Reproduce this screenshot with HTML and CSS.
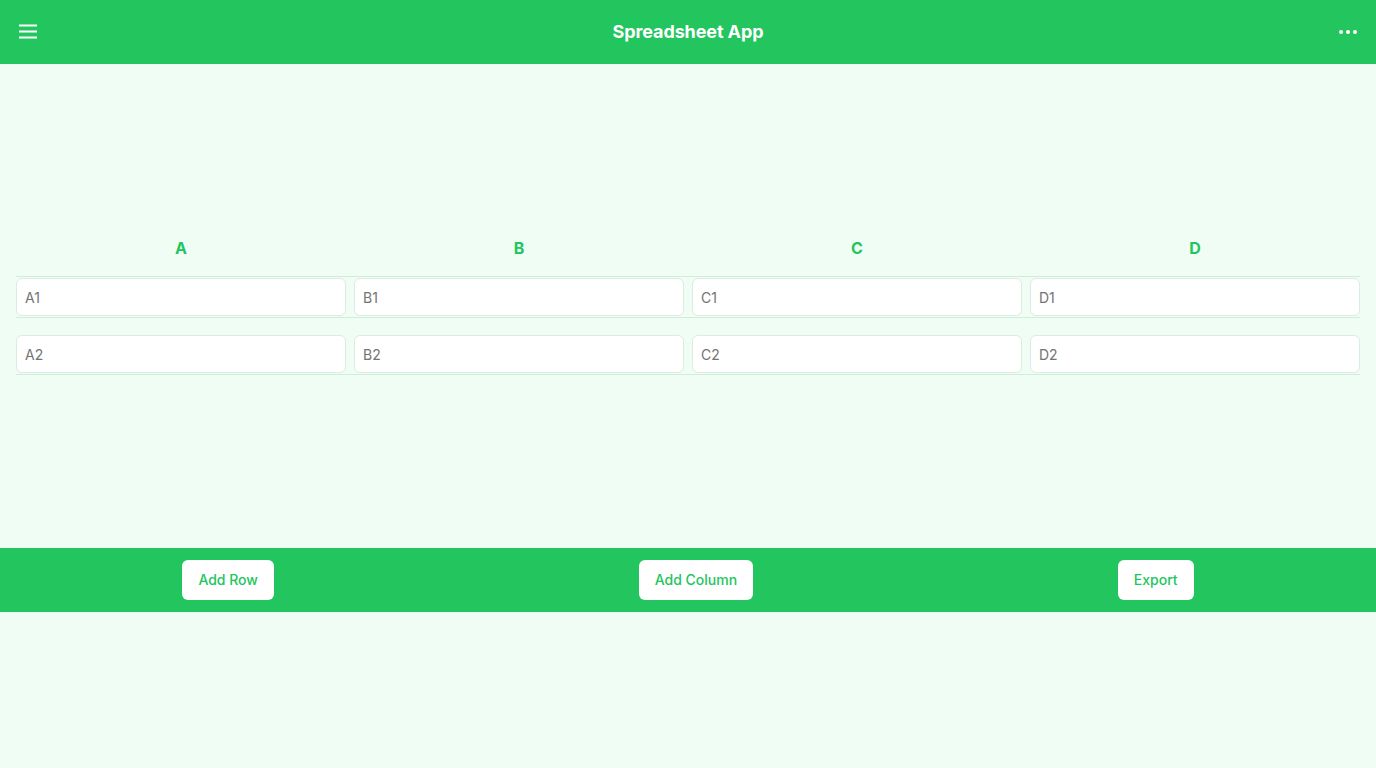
FILE: index.html
```html
<!DOCTYPE html>
<html lang="en">
<head>
<meta charset="utf-8">
<title>Spreadsheet App</title>
<link rel="stylesheet" href="styles.css">
</head>
<body>
<header class="topbar">
  <button class="icon-btn" aria-label="Menu">
    <svg width="20" height="20" viewBox="0 0 20 20"><path d="M1 3.5h18M1 9.5h18M1 15.5h18" stroke="#fff" stroke-width="2" fill="none"/></svg>
  </button>
  <h1 class="title">Spreadsheet App</h1>
  <button class="icon-btn" aria-label="More">
    <svg width="20" height="20" viewBox="0 0 20 20"><circle cx="3" cy="10" r="2" fill="#fff"/><circle cx="10" cy="10" r="2" fill="#fff"/><circle cx="17" cy="10" r="2" fill="#fff"/></svg>
  </button>
</header>
<main class="content">
  <div class="sheet">
    <div class="row head">
      <div class="col-head">A</div>
      <div class="col-head">B</div>
      <div class="col-head">C</div>
      <div class="col-head">D</div>
    </div>
    <div class="row">
      <div class="cell">A1</div>
      <div class="cell">B1</div>
      <div class="cell">C1</div>
      <div class="cell">D1</div>
    </div>
    <div class="row">
      <div class="cell">A2</div>
      <div class="cell">B2</div>
      <div class="cell">C2</div>
      <div class="cell">D2</div>
    </div>
  </div>
</main>
<footer class="bottombar">
  <button class="action">Add Row</button>
  <button class="action">Add Column</button>
  <button class="action">Export</button>
</footer>
</body>
</html>
```
FILE: styles.css
```css
* { box-sizing: border-box; }
html, body {
  margin: 0;
  padding: 0;
  background: #f0fdf4;
  font-family: Inter, "Noto Sans", sans-serif;
}
.topbar {
  height: 64px;
  background: #22c55e;
  display: flex;
  align-items: center;
  justify-content: space-between;
  padding: 0 18px;
}
.icon-btn {
  background: none;
  border: none;
  padding: 0;
  width: 20px;
  height: 20px;
  display: flex;
  cursor: pointer;
}
.title {
  margin: 0;
  color: #fff;
  font-size: 18px;
  font-weight: 700;
  line-height: 24px;
  letter-spacing: -0.1px;
}
.content {
  height: 484px;
  padding: 164px 16px 0;
}
.row {
  display: grid;
  grid-template-columns: repeat(4, 1fr);
  column-gap: 8px;
  padding: 1px 0;
  border-bottom: 1px solid #d3ebdb;
  margin-top: 16px;
}
.row.head {
  margin-top: 0;
  padding: 0;
}
.row.head + .row { margin-top: 0; }
.col-head {
  text-align: center;
  color: #22c55e;
  font-weight: 700;
  font-size: 16px;
  line-height: 24px;
  padding: 8px 0 16px;
}
.cell {
  height: 38px;
  background: #fff;
  border: 1px solid #d9ede0;
  border-radius: 6px;
  padding: 0 8px;
  display: flex;
  align-items: center;
  font-size: 14px;
  color: #737373;
}
.bottombar {
  height: 64px;
  background: #22c55e;
  display: flex;
  align-items: center;
  justify-content: space-around;
}
.action {
  background: #fff;
  color: #22c55e;
  border: none;
  border-radius: 6px;
  height: 40px;
  padding: 0 16px 2px;
  font-family: Inter, "Noto Sans", sans-serif;
  font-size: 14px;
  font-weight: 500;
  cursor: pointer;
}
```
